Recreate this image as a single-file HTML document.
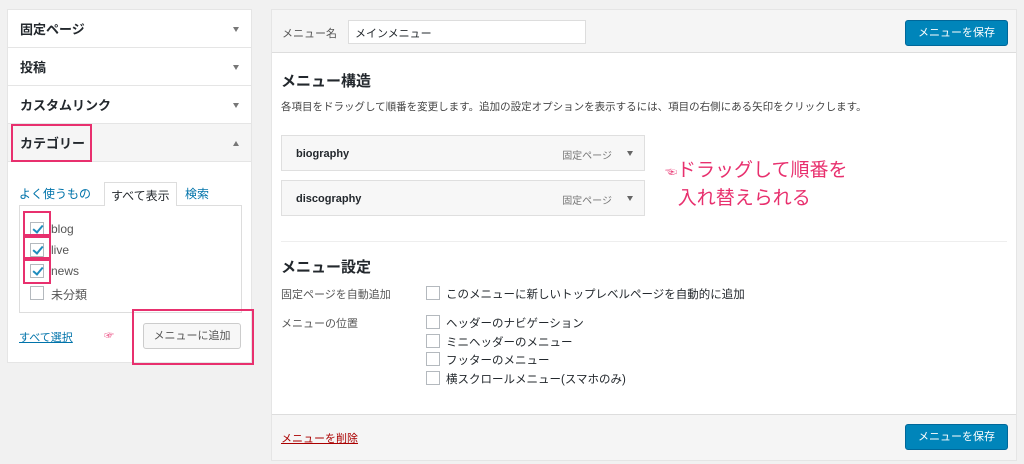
<!DOCTYPE html>
<html><head><meta charset="utf-8"><style>
*{box-sizing:border-box;margin:0;padding:0}
body{width:1024px;height:464px;background:#f1f1f1;font-family:"Liberation Sans","Noto Sans CJK JP",sans-serif;color:#23282d;position:relative;overflow:hidden;font-size:12px}
.a{position:absolute}
.lp{left:7px;top:9px;width:245px;height:354px;background:#fff;border:1px solid #e5e5e5}
.sec{position:absolute;left:0;width:243px;height:38px;border-bottom:1px solid #e5e5e5;font-weight:bold;font-size:13px;padding:9px 12px}
.arr{position:absolute;right:12px;top:17px;width:0;height:0;border-left:3px solid transparent;border-right:3px solid transparent;border-top:5px solid #777}
.up{border-top:none;border-bottom:5px solid #777}
.pink{position:absolute;border:2px solid #e8306e}
.cb{position:absolute;width:14px;height:14px;border:1px solid #b4b9be;background:#fff}
.cb.c::after{content:"";position:absolute;left:4px;top:0px;width:4px;height:8px;border:solid #1e8cbe;border-width:0 2px 2px 0;transform:rotate(40deg)}
.btn{position:absolute;background:#0085ba;border:1px solid #006799;color:#fff;border-radius:3px;font-size:11px;text-align:center;line-height:24px}
.item{position:absolute;left:281px;width:364px;height:36px;background:#f7f7f7;border:1px solid #dfdfdf;font-weight:bold;font-size:11px;padding:12px 14px}
.item span{position:absolute;right:32px;top:11px;font-weight:normal;color:#777;font-size:10px}
.item i{position:absolute;right:11px;top:15px;border-left:3px solid transparent;border-right:3px solid transparent;border-top:5px solid #666}
</style></head><body>
<div class="a lp">
 <div class="sec" style="top:0">固定ページ<div class="arr"></div></div>
 <div class="sec" style="top:38px">投稿<div class="arr"></div></div>
 <div class="sec" style="top:76px">カスタムリンク<div class="arr"></div></div>
 <div class="sec" style="top:114px;background:#f5f5f5">カテゴリー<div class="arr up"></div></div>
</div>
<div class="pink" style="left:11px;top:124px;width:81px;height:38px"></div>
<div class="a" style="left:19px;top:185px;color:#0073aa;font-size:12px">よく使うもの</div>
<div class="a" style="left:104px;top:182px;width:73px;height:24px;border:1px solid #ddd;border-bottom:none;background:#fff;font-size:12px;padding:4px 6px;z-index:2">すべて表示</div>
<div class="a" style="left:185px;top:185px;color:#0073aa;font-size:12px">検索</div>
<div class="a" style="left:19px;top:205px;width:223px;height:108px;border:1px solid #ddd;background:#fff"></div>
<div class="cb c" style="left:30px;top:222px"></div><div class="a" style="left:51px;top:222px;color:#555">blog</div>
<div class="cb c" style="left:30px;top:243px"></div><div class="a" style="left:51px;top:243px;color:#555">live</div>
<div class="cb c" style="left:30px;top:264px"></div><div class="a" style="left:51px;top:264px;color:#555">news</div>
<div class="cb" style="left:30px;top:286px"></div><div class="a" style="left:51px;top:286px;color:#555">未分類</div>
<div class="pink" style="left:23px;top:211px;width:28px;height:25px"></div>
<div class="pink" style="left:23px;top:236px;width:28px;height:23px"></div>
<div class="pink" style="left:23px;top:259px;width:28px;height:25px"></div>
<div class="a" style="left:19px;top:329px;color:#0073aa;text-decoration:underline;font-size:11px">すべて選択</div>
<div class="a" style="left:104px;top:327px;color:#e8306e;font-size:10px">☞</div>
<div class="a" style="left:143px;top:323px;width:98px;height:26px;background:#f7f7f7;border:1px solid #ccc;border-radius:3px;color:#555;font-size:11px;text-align:center;line-height:24px">メニューに追加</div>
<div class="pink" style="left:132px;top:309px;width:122px;height:56px"></div>

<div class="a" style="left:271px;top:9px;width:746px;height:452px;background:#fff;border:1px solid #e5e5e5"></div>
<div class="a" style="left:272px;top:10px;width:744px;height:43px;background:#f5f5f5;border-bottom:1px solid #ddd"></div>
<div class="a" style="left:282px;top:25px;font-size:11px;color:#555">メニュー名</div>
<div class="a" style="left:348px;top:20px;width:238px;height:24px;border:1px solid #ddd;background:#fff;padding:4px 6px;font-size:11px">メインメニュー</div>
<div class="btn" style="left:905px;top:20px;width:103px;height:26px">メニューを保存</div>
<div class="a" style="left:281px;top:70px;font-weight:bold;font-size:15px">メニュー構造</div>
<div class="a" style="left:281px;top:99px;font-size:10.5px;color:#444">各項目をドラッグして順番を変更します。追加の設定オプションを表示するには、項目の右側にある矢印をクリックします。</div>
<div class="item" style="top:135px">biography<span>固定ページ</span><i></i></div>
<div class="item" style="top:180px">discography<span>固定ページ</span><i></i></div>
<div class="a" style="left:665px;top:156px;color:#e8306e;font-size:19px;line-height:25px;font-family:'Noto Sans CJK JP',sans-serif"><span style="font-size:12px">☜</span>ドラッグして順番を<br>&nbsp;&nbsp;&nbsp;入れ替えられる</div>
<div class="a" style="left:281px;top:241px;width:726px;border-top:1px solid #eee"></div>
<div class="a" style="left:281px;top:256px;font-weight:bold;font-size:15px">メニュー設定</div>
<div class="a" style="left:281px;top:286px;font-size:11px;color:#555">固定ページを自動追加</div>
<div class="a" style="left:281px;top:315px;font-size:11px;color:#555">メニューの位置</div>
<div class="cb" style="left:426px;top:286px"></div><div class="a" style="left:446px;top:286px;font-size:11.5px">このメニューに新しいトップレベルページを自動的に追加</div>
<div class="cb" style="left:426px;top:315px"></div><div class="a" style="left:446px;top:315px;font-size:11.5px">ヘッダーのナビゲーション</div>
<div class="cb" style="left:426px;top:334px"></div><div class="a" style="left:446px;top:334px;font-size:11.5px">ミニヘッダーのメニュー</div>
<div class="cb" style="left:426px;top:352px"></div><div class="a" style="left:446px;top:352px;font-size:11.5px">フッターのメニュー</div>
<div class="cb" style="left:426px;top:371px"></div><div class="a" style="left:446px;top:371px;font-size:11.5px">横スクロールメニュー(スマホのみ)</div>
<div class="a" style="left:272px;top:414px;width:744px;height:46px;background:#f5f5f5;border-top:1px solid #ddd"></div>
<div class="a" style="left:281px;top:430px;color:#a00;text-decoration:underline;font-size:11px">メニューを削除</div>
<div class="btn" style="left:905px;top:424px;width:103px;height:26px">メニューを保存</div>
</body></html>
